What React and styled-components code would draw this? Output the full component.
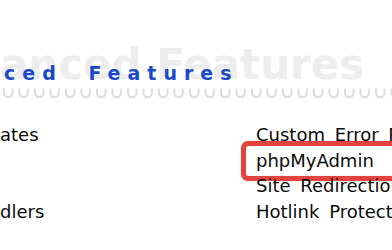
import React from "react";
import styled, { createGlobalStyle } from "styled-components";

const Global = createGlobalStyle`
  html, body { margin: 0; padding: 0; background: #ffffff; }
  body { width: 392px; height: 250px; overflow: hidden; }
`;

const Page = styled.div`
  width: 392px;
  height: 250px;
  overflow: hidden;
  padding-top: 40px;
  box-sizing: border-box;
  font-family: "DejaVu Sans", Verdana, sans-serif;
`;

const Header = styled.div`
  display: grid;
  overflow: hidden;
  white-space: nowrap;
`;

const Ghost = styled.div`
  grid-area: 1 / 1;
  margin-top: 4px;
  margin-left: -90px;
  font-size: 42px;
  line-height: 42px;
  font-weight: bold;
  color: #ededed;
`;

const Title = styled.h2`
  grid-area: 1 / 1;
  margin: 24px 0 0 -98px;
  font-size: 19px;
  line-height: 19px;
  font-weight: bold;
  letter-spacing: 7px;
  word-spacing: 12px;
  color: #1a4ac9;
`;

const Divider = styled.svg`
  display: block;
  width: 392px;
  height: 12px;
  margin-top: 1px;
`;

const Columns = styled.div`
  display: grid;
  grid-template-columns: 256px 1fr;
  margin-top: 23px;
  font-size: 18px;
  line-height: 25.5px;
  color: #0a0a0a;
`;

const List = styled.ul`
  list-style: none;
  margin: 0;
  padding: 0;
  white-space: nowrap;
  min-width: 0;
  word-spacing: ${(p) => p.$wordGap || 0}px;
`;

const Item = styled.li`
  position: relative;
  height: 25.5px;
  &::after {
    content: "";
    display: ${(p) => (p.$highlight ? "block" : "none")};
    position: absolute;
    left: -15px;
    top: -7px;
    width: 200px;
    height: 40px;
    box-sizing: border-box;
    border: 5px solid #e2433c;
    border-radius: 7px;
    box-shadow: 0 0 1px rgba(120, 20, 20, 0.5), inset 0 0 1px rgba(120, 20, 20, 0.4);
  }
`;

function UDivider() {
  return (
    <Divider viewBox="0 0 392 12">
      <defs>
        <pattern id="u" x="2" y="0" width="15.5" height="12" patternUnits="userSpaceOnUse">
          <path d="M2 1.5 V6 A4.2 4.2 0 0 0 10.4 6 V1.5" fill="none" stroke="#dadada" strokeWidth="1.9" />
        </pattern>
      </defs>
      <rect x="0" y="0" width="392" height="12" fill="url(#u)" />
    </Divider>
  );
}

export default function App() {
  return (
    <Page>
      <Global />
      <Header>
        <Ghost>Advanced Features</Ghost>
        <Title>Advanced Features</Title>
      </Header>
      <UDivider />
      <Columns>
        <List>
          <Item>ates</Item>
          <Item />
          <Item />
          <Item>dlers</Item>
        </List>
        <List $wordGap={4}>
          <Item>Custom Error Pages</Item>
          <Item $highlight>phpMyAdmin</Item>
          <Item>Site Redirection</Item>
          <Item>Hotlink Protection</Item>
        </List>
      </Columns>
    </Page>
  );
}
